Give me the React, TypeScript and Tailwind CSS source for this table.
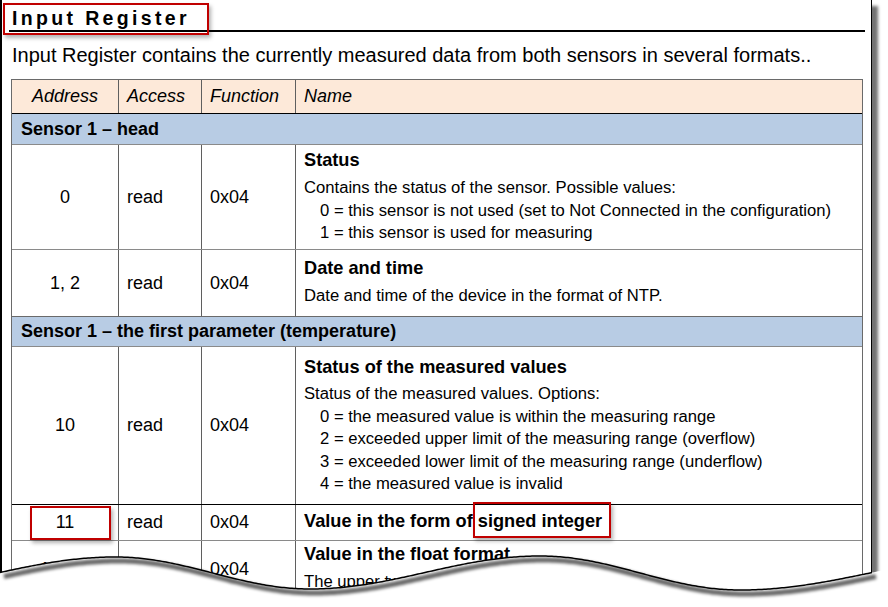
import React from "react";

const KP: [number, number][] = [
  [-120, 589],
  [115, 557],
  [310, 589],
  [540, 556],
  [740, 590],
  [1000, 556],
];

function waveY(x: number): number {
  for (let i = 0; i < KP.length - 1; i++) {
    const [x0, y0] = KP[i];
    const [x1, y1] = KP[i + 1];
    if (x >= x0 && x <= x1) {
      const t = (x - x0) / (x1 - x0);
      return y0 + ((y1 - y0) * (1 - Math.cos(Math.PI * t))) / 2;
    }
  }
  return 573;
}

function wavePoints(from: number, to: number, step = 2): string {
  const pts: string[] = [];
  for (let x = from; x <= to; x += step) {
    pts.push(`${x},${waveY(x).toFixed(2)}`);
  }
  return pts.join(" L");
}

const strokeD = `M${wavePoints(0, 872)}`;
const fillD = `M${wavePoints(0, 888)} L888,607 L0,607 Z`;

function Row({
  h,
  border = "border-[#8a8a8a]",
  addr,
  access,
  fn,
  children,
}: {
  h: string;
  border?: string;
  addr: string;
  access: string;
  fn: string;
  children: React.ReactNode;
}) {
  return (
    <div className={`flex border-b ${border} ${h}`}>
      <div className="w-[107px] shrink-0 border-r border-[#5f5f5f] flex items-center justify-center text-[18px]">
        {addr}
      </div>
      <div className="w-[83px] shrink-0 border-r border-[#5f5f5f] flex items-center pl-[8px] text-[18px]">
        {access}
      </div>
      <div className="w-[94px] shrink-0 border-r border-[#5f5f5f] flex items-center pl-[8px] text-[18px]">
        {fn}
      </div>
      <div className="flex-1 pl-[8px]">{children}</div>
    </div>
  );
}

function Group({ text, h }: { text: string; h: string }) {
  return (
    <div
      className={`flex items-center bg-[#b8cce4] border-b border-[#8a8a8a] pl-[9px] text-[18px] font-bold ${h}`}
    >
      {text}
    </div>
  );
}

export default function App() {
  return (
    <div className="relative w-[888px] h-[607px] overflow-hidden bg-white text-black font-['Liberation_Sans',Arial,sans-serif]">
      <div className="w-[872px] h-[607px] border-l-2 border-r border-black bg-white shadow-[6px_6px_3px_rgba(0,0,0,0.55)] overflow-hidden">
        {/* Title */}
        <div className="ml-[7px] mr-[6px] border-b-2 border-black pt-[6px] h-[32px]">
          <div className="pl-[3px] text-[19.5px] leading-[24px] font-bold tracking-[3.35px]">
            Input Register
          </div>
        </div>
        <div className="mt-[11px] ml-[10px] text-[20px] leading-[24px]">
          Input Register contains the currently measured data from both sensors in several formats..
        </div>

        {/* Table */}
        <div className="mt-[12px] ml-[9px] w-[852px] border-l border-t border-r border-[#6a6a6a]">
          <div className="flex h-[34px] bg-[#fde9d9] border-b border-black italic text-[18px]">
            <div className="w-[107px] shrink-0 border-r border-[#5f5f5f] flex items-center justify-center">
              Address
            </div>
            <div className="w-[83px] shrink-0 border-r border-[#5f5f5f] flex items-center pl-[8px]">
              Access
            </div>
            <div className="w-[94px] shrink-0 border-r border-[#5f5f5f] flex items-center pl-[8px]">
              Function
            </div>
            <div className="flex-1 flex items-center pl-[8px]">Name</div>
          </div>

          <Group text="Sensor 1 – head" h="h-[31px]" />

          <Row h="h-[105px]" addr="0" access="read" fn="0x04">
            <div className="pt-[3px] text-[18.2px] leading-[24px] font-bold">Status</div>
            <div className="mt-[5px] text-[16.65px] leading-[22.5px]">
              <div>Contains the status of the sensor. Possible values:</div>
              <div className="pl-[16px]">
                0 = this sensor is not used (set to Not Connected in the configuration)
              </div>
              <div className="pl-[16px]">1 = this sensor is used for measuring</div>
            </div>
          </Row>

          <Row h="h-[67px]" addr="1, 2" access="read" fn="0x04" border="border-[#6a6a6a]">
            <div className="pt-[6px] text-[18.2px] leading-[24px] font-bold">Date and time</div>
            <div className="mt-[5px] text-[16.65px] leading-[22.5px]">
              Date and time of the device in the format of NTP.
            </div>
          </Row>

          <Group text="Sensor 1 – the first parameter (temperature)" h="h-[30px]" />

          <Row h="h-[158px]" addr="10" access="read" fn="0x04" border="border-black">
            <div className="pt-[8px] text-[18.2px] leading-[24px] font-bold">
              Status of the measured values
            </div>
            <div className="mt-[4px] text-[16.65px] leading-[22.5px]">
              <div>Status of the measured values. Options:</div>
              <div className="pl-[16px]">0 = the measured value is within the measuring range</div>
              <div className="pl-[16px]">
                2 = exceeded upper limit of the measuring range (overflow)
              </div>
              <div className="pl-[16px]">
                3 = exceeded lower limit of the measuring range (underflow)
              </div>
              <div className="pl-[16px]">4 = the measured value is invalid</div>
            </div>
          </Row>

          <Row h="h-[36px]" addr="11" access="read" fn="0x04">
            <div className="pt-[4px] text-[18.2px] leading-[24px] font-bold">
              Value in the form of signed integer
            </div>
          </Row>

          <Row h="h-[57px]" addr="12, 13" access="read" fn="0x04">
            <div className="pt-[1px] text-[18.2px] leading-[24px] font-bold">
              Value in the float format
            </div>
            <div className="mt-[5px] text-[16.65px] leading-[22.5px]">
              The upper two registers contain the value
            </div>
          </Row>
        </div>
      </div>

      {/* Annotation boxes */}
      <div className="absolute left-[3px] top-[3px] w-[206px] h-[32px] border-2 border-[#c00000] shadow-[2px_3px_4px_rgba(0,0,0,0.3)]" />
      <div className="absolute left-[30px] top-[506px] w-[81px] h-[34px] border-2 border-[#c00000] shadow-[2px_3px_4px_rgba(0,0,0,0.3)]" />
      <div className="absolute left-[473px] top-[502px] w-[138px] h-[36px] border-2 border-[#c00000] shadow-[2px_3px_4px_rgba(0,0,0,0.3)]" />

      {/* Torn wavy bottom edge */}
      <svg
        className="absolute inset-0 pointer-events-none"
        width="888"
        height="607"
        viewBox="0 0 888 607"
      >
        <defs>
          <filter id="blur" x="-10%" y="-50%" width="120%" height="200%">
            <feGaussianBlur stdDeviation="1.6" />
          </filter>
        </defs>
        <path d={fillD} fill="#ffffff" />
        <path
          d={strokeD}
          transform="translate(4,4)"
          fill="none"
          stroke="rgba(0,0,0,0.6)"
          strokeWidth="5"
          filter="url(#blur)"
        />
        <path d={strokeD} fill="none" stroke="#000" strokeWidth="1.5" />
      </svg>
    </div>
  );
}
